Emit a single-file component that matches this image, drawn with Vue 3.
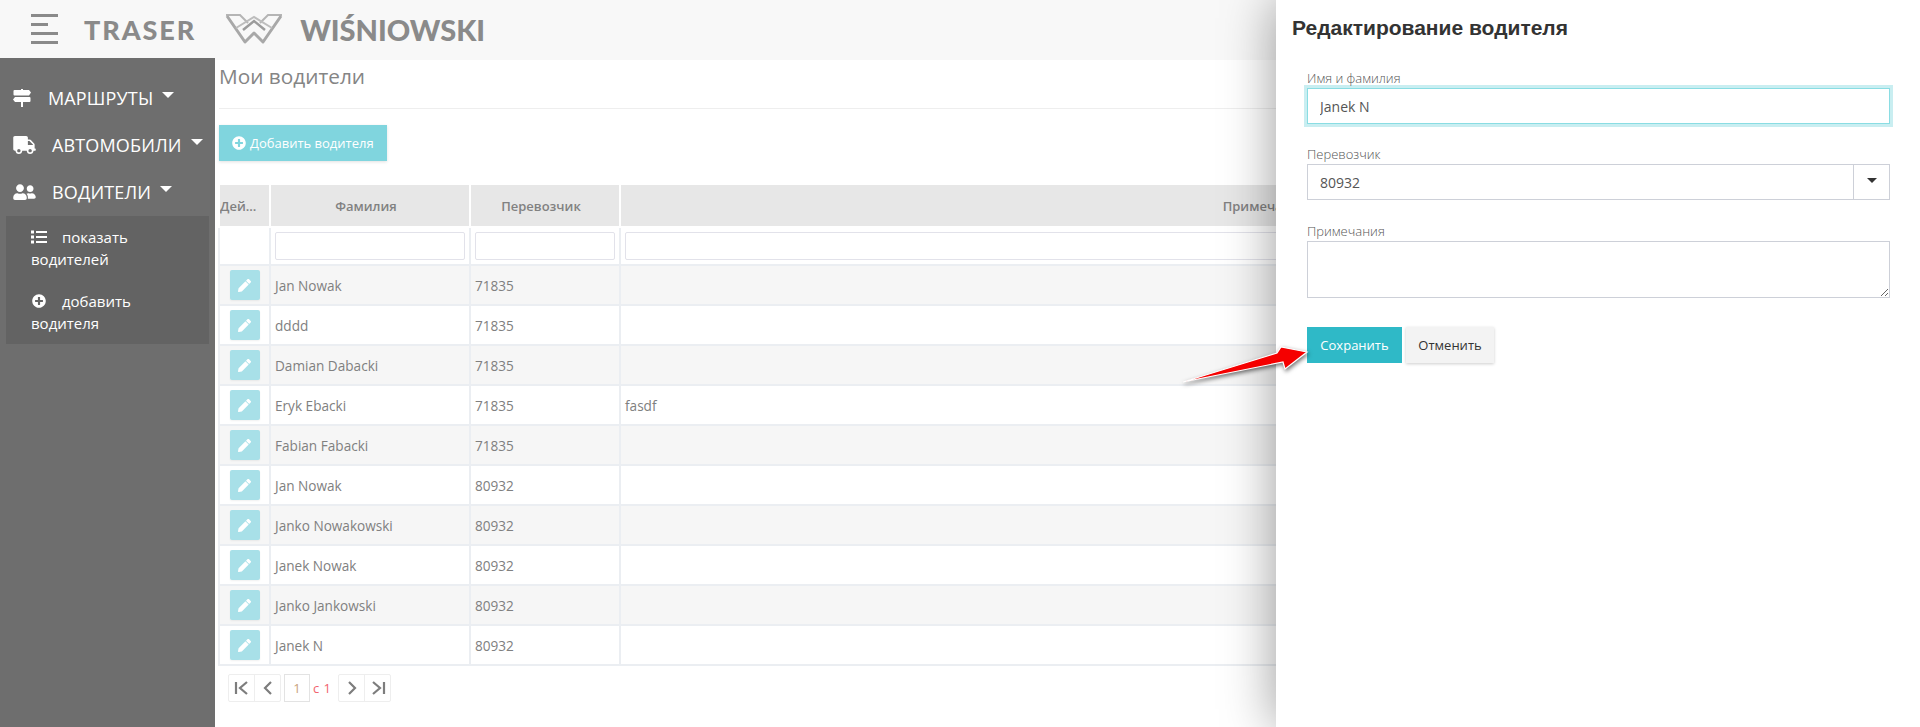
<script setup>
const drivers = [
  { name: 'Jan Nowak', carrier: '71835', note: '' },
  { name: 'dddd', carrier: '71835', note: '' },
  { name: 'Damian Dabacki', carrier: '71835', note: '' },
  { name: 'Eryk Ebacki', carrier: '71835', note: 'fasdf' },
  { name: 'Fabian Fabacki', carrier: '71835', note: '' },
  { name: 'Jan Nowak', carrier: '80932', note: '' },
  { name: 'Janko Nowakowski', carrier: '80932', note: '' },
  { name: 'Janek Nowak', carrier: '80932', note: '' },
  { name: 'Janko Jankowski', carrier: '80932', note: '' },
  { name: 'Janek N', carrier: '80932', note: '' }
]

const pencil = 'M498 142l-46 46c-5 5-12 5-17 0L324 77c-5-5-5-12 0-17l46-46c19-19 49-19 68 0l60 60c19 19 19 49 0 68zM284 100L22 362 0 484c-3 16 11 31 28 28l122-21 262-263c5-5 5-12 0-17L301 100c-5-5-12-5-17 0z'
const plus = 'M256 8C119 8 8 119 8 256s111 248 248 248 248-111 248-248S393 8 256 8zm144 276c0 6.6-5.4 12-12 12h-92v92c0 6.6-5.4 12-12 12h-56c-6.6 0-12-5.4-12-12v-92h-92c-6.6 0-12-5.4-12-12v-56c0-6.6 5.4-12 12-12h92v-92c0-6.6 5.4-12 12-12h56c6.6 0 12 5.4 12 12v92h92c6.6 0 12 5.4 12 12v56z'
</script>

<template>
  <div class="page">
    <header class="topbar">
      <div class="burger">
        <span class="long"></span>
        <span class="short"></span>
        <span class="mid"></span>
        <span class="long"></span>
      </div>
      <span class="brand">TRASER</span>
      <svg class="logo" viewBox="0 0 58 30" fill="none">
        <path d="M1 1h14l8 8" stroke="#b5b5b5" stroke-width="2" />
        <path d="M57 1H43l-8 8" stroke="#b5b5b5" stroke-width="2" />
        <path d="M2 2l18 26 9-9 9 9L56 2" stroke="#a8a8a8" stroke-width="3" stroke-linejoin="round" />
        <path d="M11 12L29 1l18 11" stroke="#bdbdbd" stroke-width="2" transform="translate(0 2)" />
        <path d="M18 16l11-9 11 9" stroke="#9c9c9c" stroke-width="2.500" />
      </svg>
      <span class="company">WIŚNIOWSKI</span>
    </header>

    <div class="body">
      <aside class="sidebar">
        <div class="menu-item first">
          <svg class="ic-signs" viewBox="0 0 18 18" fill="#fff">
            <path d="M8 0h2v1h6l2 2.500L16 6.500H1.500a1 1 0 0 1-1-1V2a1 1 0 0 1 1-1H8zM2 8h14.500a1 1 0 0 1 1 1v3a1 1 0 0 1-1 1H10v5H8v-5H2l-2-2.500z" />
          </svg>
          <span>МАРШРУТЫ</span><i class="caret"></i>
        </div>
        <div class="menu-item">
          <svg class="ic-truck" viewBox="0 0 640 512" fill="#fff">
            <path d="M624 352h-16V243.900c0-12.700-5.100-24.900-14.100-33.900L494 110.100c-9-9-21.200-14.100-33.900-14.100H416V48c0-26.500-21.500-48-48-48H48C21.500 0 0 21.500 0 48v320c0 26.500 21.500 48 48 48h16c0 53 43 96 96 96s96-43 96-96h128c0 53 43 96 96 96s96-43 96-96h48c8.800 0 16-7.200 16-16v-32c0-8.800-7.200-16-16-16zM160 464c-26.500 0-48-21.500-48-48s21.500-48 48-48 48 21.500 48 48-21.500 48-48 48zm320 0c-26.500 0-48-21.500-48-48s21.500-48 48-48 48 21.500 48 48-21.500 48-48 48zm80-208H416V144h44.100l99.900 99.900V256z" />
          </svg>
          <span>АВТОМОБИЛИ</span><i class="caret"></i>
        </div>
        <div class="menu-item">
          <svg class="ic-truck" viewBox="0 0 640 512" fill="#fff">
            <path d="M192 256c61.900 0 112-50.100 112-112S253.900 32 192 32 80 82.100 80 144s50.100 112 112 112zm76.800 32h-8.300c-20.800 10-43.900 16-68.500 16s-47.600-6-68.500-16h-8.300C51.600 288 0 339.600 0 403.200V432c0 26.500 21.500 48 48 48h288c26.500 0 48-21.500 48-48v-28.800c0-63.600-51.600-115.200-115.200-115.200zM480 256c53 0 96-43 96-96s-43-96-96-96-96 43-96 96 43 96 96 96zm48 32h-3.800c-13.900 4.800-28.600 8-44.200 8s-30.300-3.200-44.200-8H432c-20.400 0-39.200 5.900-55.700 15.400 24.400 26.300 39.700 61.200 39.700 99.800v38.400c0 2.200-.5 4.300-.6 6.400H592c26.500 0 48-21.500 48-48 0-61.900-50.100-112-112-112z" />
          </svg>
          <span>ВОДИТЕЛИ</span><i class="caret"></i>
        </div>
        <div class="submenu">
          <div class="sub-item">
            <svg class="ic-sub" viewBox="0 0 16 13" fill="#fff">
              <rect x="0" y="0" width="3" height="3" />
              <rect x="0" y="5" width="3" height="3" />
              <rect x="0" y="10" width="3" height="3" />
              <rect x="5" y="0.500" width="11" height="2" />
              <rect x="5" y="5.500" width="11" height="2" />
              <rect x="5" y="10.500" width="11" height="2" />
            </svg>
            показать водителей
          </div>
          <div class="sub-item">
            <svg class="ic-sub" viewBox="0 0 512 512" fill="#fff"><path :d="plus" /></svg>
            добавить водителя
          </div>
        </div>
      </aside>

      <main class="content">
        <h1 class="title">Мои водители</h1>
        <button class="add-btn">
          <svg viewBox="0 0 512 512" fill="#fff"><path :d="plus" /></svg>
          Добавить водителя
        </button>

        <table class="grid">
          <colgroup>
            <col class="c-act" /><col class="c-name" /><col class="c-carrier" /><col />
          </colgroup>
          <thead>
            <tr class="head">
              <th class="clip">Дей...</th>
              <th>Фамилия</th>
              <th>Перевозчик</th>
              <th class="notes">Примечания</th>
            </tr>
            <tr class="filters">
              <td></td>
              <td><input type="text" /></td>
              <td><input type="text" /></td>
              <td><input type="text" /></td>
            </tr>
          </thead>
          <tbody>
            <tr v-for="(d, i) in drivers" :key="i" :class="{ odd: i % 2 === 0 }">
              <td class="act">
                <span class="edit">
                  <svg viewBox="0 0 512 512" fill="#fff"><path :d="pencil" /></svg>
                </span>
              </td>
              <td>{{ d.name }}</td>
              <td>{{ d.carrier }}</td>
              <td>{{ d.note }}</td>
            </tr>
          </tbody>
        </table>

        <div class="pager">
          <div class="pg-group">
            <span class="pg">
              <svg viewBox="0 0 16 16"><path d="M2 2v12M13 2L6 8l7 6" /></svg>
            </span>
            <span class="pg">
              <svg viewBox="0 0 16 16"><path d="M11 2L5 8l6 6" /></svg>
            </span>
          </div>
          <span class="pg-num">1</span>
          <span class="pg-of">с 1</span>
          <div class="pg-group">
            <span class="pg">
              <svg viewBox="0 0 16 16"><path d="M5 2l6 6-6 6" /></svg>
            </span>
            <span class="pg">
              <svg viewBox="0 0 16 16"><path d="M14 2v12M3 2l7 6-7 6" /></svg>
            </span>
          </div>
        </div>
      </main>
    </div>

    <section class="drawer">
      <h2>Редактирование водителя</h2>
      <div class="form">
        <label class="field-name">
          <span>Имя и фамилия</span>
          <input class="focused" type="text" value="Janek N" />
        </label>
        <label class="field-carrier">
          <span>Перевозчик</span>
          <div class="select">
            <div class="select-val">80932</div>
            <div class="select-arrow"><i></i></div>
          </div>
        </label>
        <label class="field-note">
          <span>Примечания</span>
          <textarea></textarea>
        </label>
        <div class="actions">
          <button class="save">Сохранить</button>
          <button class="cancel">Отменить</button>
        </div>
      </div>
    </section>

    <svg class="arrow" viewBox="0 0 140 50" width="140" height="50">
      <path class="arrow-shape" d="M7 42L101 13 105 7 131 12 109 29 107 22z" fill="#f50000" />
    </svg>
  </div>
</template>

<style>
html, body {
  margin: 0;
  background: #fff;
}
</style>

<style scoped>
.page {
  position: relative;
  width: 1920px;
  height: 727px;
  overflow: hidden;
  font-family: "Open Sans", sans-serif;
  color: #777;
  background: #fff;
}

.topbar {
  display: flex;
  align-items: center;
  height: 60px;
  padding: 0 0 2px 31px;
  background: #f8f8f8;
  box-sizing: border-box;
}

.burger {
  display: flex;
  flex-direction: column;
  gap: 6px;
  width: 27px;
}

.burger span {
  display: block;
  height: 3px;
  background: #8a8a8a;
}

.burger .long { width: 27px; }
.burger .short { width: 17px; }
.burger .mid { width: 27px; }

.brand {
  margin-left: 26px;
  font-family: Lato, sans-serif;
  font-weight: 900;
  font-size: 27px;
  letter-spacing: 1.900px;
  color: #8a8a8a;
}

.logo {
  width: 58px;
  height: 30px;
  margin-left: 29px;
}

.company {
  margin-left: 17px;
  font-family: Lato, sans-serif;
  font-weight: 900;
  font-size: 29px;
  color: #8a8a8a;
}

.body {
  display: flex;
  height: 669px;
  margin-top: -2px;
}

.sidebar {
  position: relative;
  width: 215px;
  flex: none;
  background: #6e6e6e;
  color: #fff;
  box-sizing: border-box;
  padding-top: 16px;
}

.menu-item {
  display: flex;
  align-items: center;
  height: 47px;
  padding-left: 13px;
  font-size: 18px;
}

.menu-item.first span {
  margin-left: 17px;
}

.menu-item span {
  margin-left: 16px;
  letter-spacing: 0.15px;
}

.ic-signs {
  width: 18px;
  height: 18px;
}

.ic-truck {
  width: 23px;
  height: 18px;
}

.caret {
  width: 0;
  height: 0;
  margin: -6px 0 0 9px;
  border-left: 6px solid transparent;
  border-right: 6px solid transparent;
  border-top: 6px solid #fff;
}

.submenu {
  margin: 1px 6px 0;
  padding: 10px 0 0 25px;
  height: 128px;
  box-sizing: border-box;
  background: #636363;
  font-size: 15px;
  line-height: 22px;
}

.sub-item {
  width: 140px;
  margin-bottom: 20px;
}

.ic-sub {
  width: 16px;
  height: 14px;
  margin-right: 11px;
  vertical-align: -1px;
}

.content {
  flex: 1;
  min-width: 0;
  padding: 2px 10px 0 4px;
}

.title {
  margin: 0;
  height: 49px;
  padding-top: 3px;
  box-sizing: border-box;
  border-bottom: 1px solid #eee;
  font-size: 20.800px;
  font-weight: 400;
  line-height: 26px;
  color: #858585;
}

.add-btn {
  display: flex;
  align-items: center;
  gap: 4px;
  width: 168px;
  height: 36px;
  margin-top: 16px;
  padding: 0 13px;
  border: none;
  background: #80d5de;
  box-shadow: 0 1px 3px rgba(0, 0, 0, 0.12);
  color: #fff;
  font-family: inherit;
  font-size: 13px;
  white-space: nowrap;
}

.add-btn svg {
  width: 14px;
  height: 14px;
}

.grid {
  width: 100%;
  margin: 24px 0 0 -1px;
  table-layout: fixed;
  border-collapse: collapse;
  font-size: 13.600px;
}

.c-act { width: 51px; }
.c-name { width: 200px; }
.c-carrier { width: 150px; }

.grid th,
.grid td {
  border: 2px solid #ebeef2;
  padding: 0 4px;
  box-sizing: border-box;
}

.head th {
  height: 42px;
  padding-right: 12px;
  background: #e7e7e7;
  border-color: #fff;
  border-top: none;
  font-size: 13px;
  font-weight: 600;
  color: #818181;
}

.head th.clip {
  padding: 0;
  text-align: left;
  white-space: nowrap;
  overflow: hidden;
}

.head th.notes {
  padding-right: 2px;
}

.filters td {
  height: 38px;
  border-top-color: #fff;
}

.filters input {
  display: block;
  width: 100%;
  height: 28px;
  box-sizing: border-box;
  border: 1px solid #e2e2ea;
  border-radius: 2px;
  background: #fff;
  outline: none;
}

tbody td {
  height: 40px;
  color: #808080;
}

tbody tr.odd td {
  background: #f6f6f6;
}

.act {
  text-align: center;
}

.edit {
  display: inline-flex;
  align-items: center;
  justify-content: center;
  width: 30px;
  height: 30px;
  vertical-align: middle;
  border-radius: 2px;
  background: #a8e0e8;
  box-shadow: 0 1px 2px rgba(0, 0, 0, 0.06);
}

.edit svg {
  width: 13px;
  height: 13px;
}

.pager {
  display: flex;
  align-items: center;
  height: 28px;
  margin: 8px 0 0 9px;
  font-size: 13px;
}

.pg-group {
  display: flex;
  border: 1px solid #eee;
  border-radius: 2px;
}

.pg {
  display: flex;
  align-items: center;
  justify-content: center;
  width: 25px;
  height: 26px;
}

.pg + .pg {
  border-left: 1px solid #eee;
}

.pg svg {
  width: 16px;
  height: 16px;
  fill: none;
  stroke: #7d7d7d;
  stroke-width: 2.200;
}

.pg-num {
  display: flex;
  align-items: center;
  justify-content: center;
  width: 26px;
  height: 28px;
  margin-left: 3px;
  box-sizing: border-box;
  border: 1px solid #e3e3e3;
  color: #c9a27c;
}

.pg-of {
  width: 28px;
  padding-left: 3px;
  box-sizing: border-box;
  letter-spacing: 0.5px;
  color: #f2646e;
}

.drawer {
  position: absolute;
  top: 0;
  right: 0;
  bottom: 0;
  width: 644px;
  background: #fff;
  box-shadow: 0 0 50px rgba(0, 0, 0, 0.4);
  font-size: 13px;
}

.drawer h2 {
  margin: 16px 0 0 16px;
  font-family: "Liberation Sans", sans-serif;
  font-size: 21px;
  line-height: 23px;
  font-weight: 700;
  color: #333;
}

.form {
  width: 583px;
  margin: 30px 0 0 31px;
}

.form label {
  display: block;
}

.form label span {
  display: block;
  margin-bottom: 1px;
  font-size: 13px;
  line-height: 18px;
  font-weight: 300;
  color: #555;
}

.field-carrier {
  margin-top: 21px;
}

.field-note {
  margin-top: 22px;
}

.focused {
  display: block;
  width: 100%;
  height: 36px;
  padding: 0 12px;
  box-sizing: border-box;
  border: 1px solid #8adde3;
  box-shadow: 0 0 0 3px #c9eef1;
  outline: none;
  font-family: inherit;
  font-size: 14px;
  color: #555;
}

.select {
  display: flex;
  height: 36px;
  box-sizing: border-box;
  border: 1px solid #cdd0d8;
  font-size: 14px;
  color: #555;
}

.select-val {
  flex: 1;
  padding: 1px 0 0 12px;
  line-height: 34px;
}

.select-arrow {
  display: flex;
  align-items: center;
  justify-content: center;
  width: 35px;
  border-left: 1px solid #cdd0d8;
}

.select-arrow i {
  width: 0;
  height: 0;
  margin-top: -4px;
  border-left: 5px solid transparent;
  border-right: 5px solid transparent;
  border-top: 5px solid #333;
}

textarea {
  display: block;
  width: 100%;
  height: 57px;
  box-sizing: border-box;
  border: 1px solid #cdd0d8;
  outline: none;
}

.actions {
  display: flex;
  gap: 4px;
  margin-top: 29px;
}

.actions button {
  height: 36px;
  border: none;
  font-family: inherit;
  font-size: 13px;
}

.save {
  width: 95px;
  background: #2fb9c7;
  color: #fff;
}

.cancel {
  width: 88px;
  background: #f3f3f3;
  color: #333;
  box-shadow: 0 1px 3px rgba(0, 0, 0, 0.2);
}

.arrow {
  position: absolute;
  left: 1176px;
  top: 340px;
}

.arrow-shape {
  stroke: #fff;
  stroke-width: 1.200;
  filter: drop-shadow(1px 2px 2px rgba(0, 0, 0, 0.55));
}
</style>
